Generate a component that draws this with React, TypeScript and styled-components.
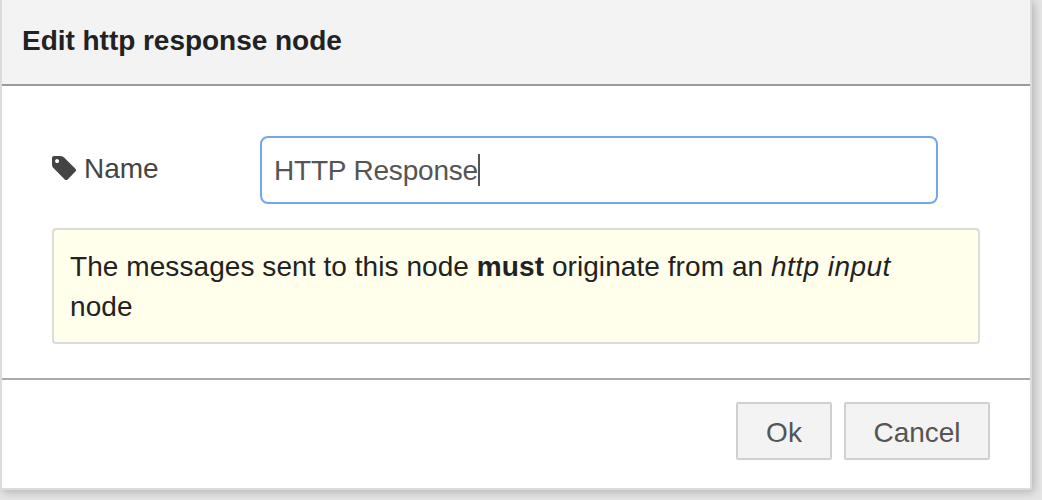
import React from 'react';
import styled, { createGlobalStyle } from 'styled-components';

const GlobalStyle = createGlobalStyle`
  * { box-sizing: border-box; }
  html, body { margin: 0; height: 500px; overflow: hidden; background: #e5e5e5; }
  body {
    font-family: "Liberation Sans", Arial, sans-serif;
    font-size: 28px;
    line-height: 40px;
    color: #222;
  }
`;

const Dialog = styled.section`
  width: 1032px;
  height: 490px;
  display: flex;
  flex-direction: column;
  background: #fff;
  border: solid #dcdcdc;
  border-width: 0 2px 2px;
  border-radius: 0 0 3px 3px;
  box-shadow: 2px 2px 10px rgba(0, 0, 0, 0.23);
`;

const Header = styled.header`
  height: 86px;
  flex: none;
  padding: 21px 20px 0;
  background: #f3f3f3;
  border-bottom: 2px solid #999;
`;

const Title = styled.h1`
  margin: 0;
  font-size: 28px;
  line-height: 40px;
  font-weight: 700;
  letter-spacing: -0.03px;
  white-space: nowrap;
`;

const Body = styled.div`
  flex: 1;
  padding: 50px 50px 0;
`;

const FormRow = styled.div`
  display: flex;
  align-items: center;
  height: 68px;
  margin-bottom: 24px;
`;

const Label = styled.label`
  display: flex;
  align-items: center;
  width: 208px;
  gap: 8px;
  padding-bottom: 3px;
  color: #444;
`;

const TagIcon = styled.svg`
  width: 24px;
  height: 24px;
  margin-bottom: 1px;
  fill: #444;
`;

const Field = styled.div`
  display: flex;
  align-items: center;
  width: 678px;
  height: 68px;
  padding: 0 12px;
  border: 2px solid #72a8ea;
  border-radius: 8px;
  background: #fff;
  color: #555;
`;

const Value = styled.span`
  padding-top: 2px;
  letter-spacing: -0.19px;
`;

const Caret = styled.span`
  width: 2px;
  height: 32px;
  background: #555;
`;

const Tips = styled.div`
  width: 928px;
  padding: 17px 16px 15px;
  border: 2px solid #dcdcdc;
  border-radius: 4px;
  background: #ffffeb;
  letter-spacing: 0.07px;

  i { letter-spacing: 0.45px; }
`;

const Footer = styled.footer`
  display: flex;
  justify-content: flex-end;
  gap: 12px;
  height: 110px;
  flex: none;
  padding: 22px 40px 0 0;
  border-top: 2px solid #aaa;
`;

const Button = styled.button<{ $width: number }>`
  width: ${({ $width }) => $width}px;
  height: 58px;
  padding: 4px 0 0;
  border: 2px solid #d0d0d0;
  border-radius: 2px;
  background: #f3f3f3;
  color: #555;
  font: inherit;
`;

export default function App() {
  return (
    <>
      <GlobalStyle />
      <Dialog>
        <Header>
          <Title>Edit http response node</Title>
        </Header>
        <Body>
          <FormRow>
            <Label>
              <TagIcon viewBox="0 128 1515 1515" aria-hidden="true">
                <path d="M448 448q0-53-37.5-90.5t-90.5-37.5-90.5 37.5-37.5 90.5 37.5 90.5 90.5 37.5 90.5-37.5 37.5-90.5zm1067 576q0 53-37 90l-491 492q-39 37-91 37-53 0-90-37l-715-716q-38-37-64.5-101t-26.5-117v-416q0-52 38-90t90-38h416q53 0 117 26.5t102 64.5l715 714q37 39 37 91z" />
              </TagIcon>
              <span>Name</span>
            </Label>
            <Field>
              <Value>HTTP Response</Value>
              <Caret />
            </Field>
          </FormRow>
          <Tips>
            The messages sent to this node <b>must</b> originate from an <i>http input</i>
            <br />
            node
          </Tips>
        </Body>
        <Footer>
          <Button $width={96}>Ok</Button>
          <Button $width={146}>Cancel</Button>
        </Footer>
      </Dialog>
    </>
  );
}
